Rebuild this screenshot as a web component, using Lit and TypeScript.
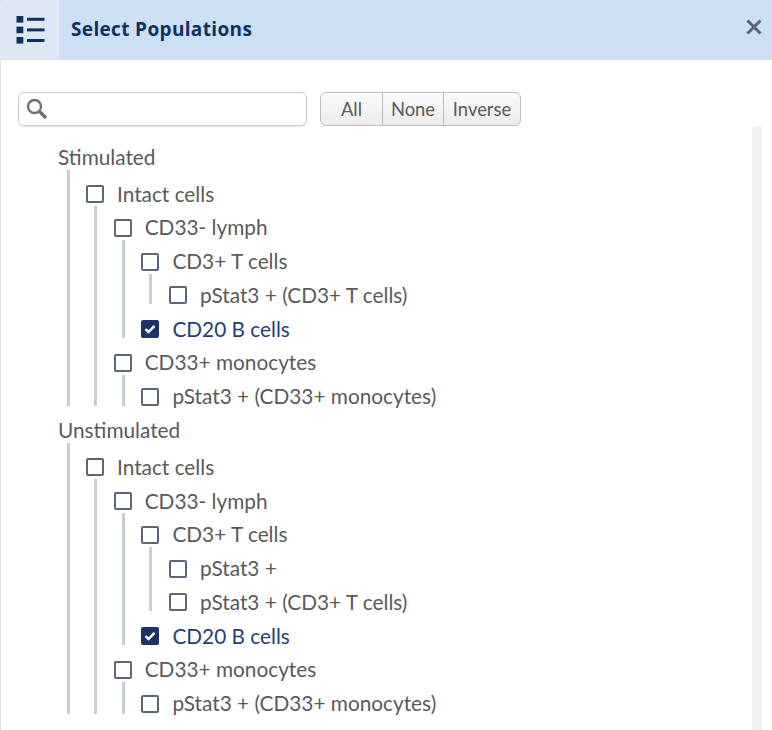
import { LitElement, html, css } from "lit";
import { customElement } from "lit/decorators.js";

type Node = { label: string; checked?: boolean; kids?: Node[] };

const tree = (extra: boolean): Node[] => [
  {
    label: "Intact cells",
    kids: [
      {
        label: "CD33- lymph",
        kids: [
          {
            label: "CD3+ T cells",
            kids: extra
              ? [{ label: "pStat3 +" }, { label: "pStat3 + (CD3+ T cells)" }]
              : [{ label: "pStat3 + (CD3+ T cells)" }],
          },
          { label: "CD20 B cells", checked: true },
        ],
      },
      {
        label: "CD33+ monocytes",
        kids: [{ label: "pStat3 + (CD33+ monocytes)" }],
      },
    ],
  },
];

@customElement("app-root")
export class AppRoot extends LitElement {
  static styles = css`
    :host {
      display: block;
      width: 772px;
      height: 730px;
      overflow: hidden;
      background: #fff;
      font-family: "Lato", sans-serif;
      color: #5a5a5a;
      box-sizing: border-box;
      box-shadow: inset 1px 0 0 #e0e0e0;
    }
    .header {
      display: flex;
      align-items: center;
      height: 60px;
      background: #cddff3;
      box-sizing: border-box;
      border-bottom: 1px solid #d9e3ef;
    }
    .hicon {
      width: 59px;
      height: 59px;
      background: #dee8f5;
      border-top-left-radius: 3px;
      display: flex;
      align-items: center;
      justify-content: center;
      flex: none;
    }
    .title {
      margin: -2px 0 0 12px;
      flex: 1;
      font-family: "Open Sans", sans-serif;
      font-weight: 700;
      font-size: 19px;
      letter-spacing: 0.35px;
      color: #12305f;
    }
    .close {
      margin: -5px 9px 0 0;
      display: flex;
    }
    .tools {
      display: flex;
      align-items: center;
      gap: 13px;
      padding: 32px 0 0 18px;
      height: 34px;
    }
    .search {
      width: 289px;
      height: 34px;
      box-sizing: border-box;
      border: 1px solid #cccccc;
      border-radius: 6px;
      background: #fff;
      display: flex;
      align-items: center;
      padding-left: 6px;
      box-shadow: 0 1px 1px #e8e8e8;
    }
    .btns {
      display: flex;
      height: 34px;
      box-sizing: border-box;
      border: 1px solid #bdbdbd;
      border-radius: 6px;
      background: linear-gradient(#fafafa, #ececec);
      font-size: 18.4px;
      color: #5a5a5a;
      overflow: hidden;
    }
    .btn {
      display: flex;
      align-items: center;
      justify-content: center;
      box-sizing: border-box;
      border-right: 1px solid #bdbdbd;
    }
    .btn:last-child {
      border-right: none;
    }
    .b1 { width: 62px; }
    .b2 { width: 61px; }
    .b3 { width: 76px; }
    .body {
      position: relative;
      padding: 22px 0 0 58px;
      display: flex;
      flex-direction: column;
      gap: 15.75px;
    }
    .scroll {
      position: absolute;
      left: 752px;
      top: 0;
      width: 10px;
      height: 604px;
      background: #f2f2f2;
      border-radius: 3px 3px 0 0;
    }
    .row {
      display: flex;
      align-items: center;
      height: 18px;
      gap: 13px;
      font-size: 20.8px;
      white-space: nowrap;
    }
    .row.on {
      color: #253f75;
    }
    .lbl {
      padding-bottom: 2px;
    }
    .box {
      width: 18px;
      height: 18px;
      box-sizing: border-box;
      border: 2.5px solid #5c667a;
      border-radius: 2px;
      flex: none;
      display: flex;
      align-items: center;
      justify-content: center;
    }
    .box.on {
      background: #1c3268;
      border-color: #1c3268;
    }
    .group {
      display: flex;
      flex-direction: column;
    }
    .kids {
      display: flex;
      flex-direction: column;
      gap: 15.75px;
      margin: 3px 0 0 8px;
      padding: 12.75px 0 0 16.7px;
      border-left: 3px solid #c9ced6;
    }
    .kids.top {
      margin: 4px 0 0 8.5px;
      padding-top: 15px;
      padding-left: 16.5px;
    }
    .tail .group:last-child > .kids:not(.top):has(> .group:only-child) {
      padding-bottom: 1.5px;
    }
  `;

  private node(n: Node): unknown {
    return html`<div class="group">
      <div class="row ${n.checked ? "on" : ""}">
        <span class="box ${n.checked ? "on" : ""}">
          ${n.checked
            ? html`<svg width="12" height="10" viewBox="0 0 12 10"><path d="M1.5 5.2 4.5 8 10.5 1.8" fill="none" stroke="#fff" stroke-width="2.4"/></svg>`
            : ""}
        </span>
        <span class="lbl">${n.label}</span>
      </div>
      ${n.kids
        ? html`<div class="kids">${n.kids.map((k) => this.node(k))}</div>`
        : ""}
    </div>`;
  }

  private root(label: string, extra: boolean) {
    return html`<div class="group ${extra ? "tail" : ""}">
      <div class="row"><span class="lbl">${label}</span></div>
      <div class="kids top">${tree(extra).map((k) => this.node(k))}</div>
    </div>`;
  }

  render() {
    return html`
      <div class="header">
        <div class="hicon">
          <svg width="30" height="30" viewBox="0 0 30 30" fill="#12305f">
            <rect x="1.5" y="1" width="6.8" height="6.6"/>
            <rect x="1.5" y="11.6" width="6.8" height="6.6"/>
            <rect x="1.5" y="22" width="6.8" height="6.6"/>
            <rect x="12" y="2.8" width="17.5" height="3"/>
            <rect x="12" y="13.4" width="17.5" height="3"/>
            <rect x="12" y="24" width="17.5" height="3"/>
          </svg>
        </div>
        <div class="title">Select Populations</div>
        <span class="close">
          <svg width="18" height="18" viewBox="0 0 18 18"><path d="M2.5 2.5 15.5 15.5M15.5 2.5 2.5 15.5" stroke="#5f6670" stroke-width="3" fill="none"/></svg>
        </span>
      </div>
      <div class="tools">
        <div class="search">
          <svg width="24" height="24" viewBox="0 0 24 24" fill="none" stroke="#707070">
            <circle cx="9.5" cy="9.5" r="6.5" stroke-width="2.4"/>
            <path d="M14.5 14.5 21 21" stroke-width="3.4"/>
          </svg>
        </div>
        <div class="btns">
          <div class="btn b1">All</div>
          <div class="btn b2">None</div>
          <div class="btn b3">Inverse</div>
        </div>
      </div>
      <div class="body">
        <div class="scroll"></div>
        ${this.root("Stimulated", false)} ${this.root("Unstimulated", true)}
      </div>
    `;
  }
}
